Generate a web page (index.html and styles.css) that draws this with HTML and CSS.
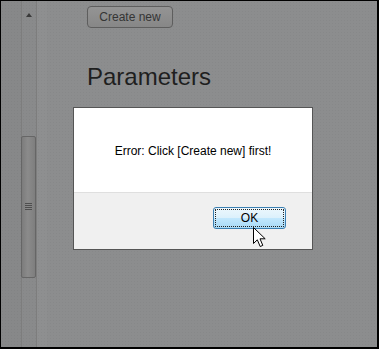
FILE: index.html
```html
<!DOCTYPE html>
<html>
<head>
<meta charset="utf-8">
<link rel="stylesheet" href="styles.css">
</head>
<body>
<div class="screen">
  <aside class="sidebar">
    <div class="side-a"></div>
    <div class="track">
      <div class="arrow-up"></div>
      <div class="thumb"><div class="grip"></div></div>
    </div>
    <div class="side-c"></div>
  </aside>
  <main class="main">
    <button class="btn-create">Create new</button>
    <h1 class="title">Parameters</h1>
  </main>

  <div class="dialog">
    <div class="dialog-body">Error: Click [Create new] first!</div>
    <div class="dialog-foot">
      <button class="btn-ok">OK</button>
    </div>
  </div>

  <svg class="cursor" width="14" height="21" viewBox="0 0 14 21">
    <path d="M0.5 0.5 L0.5 16.5 L4.3 12.8 L7.2 19.5 L9.8 18.4 L7 11.8 L12.2 11.8 Z" fill="#fff" stroke="#000" stroke-width="1" stroke-linejoin="miter"/>
  </svg>
</div>
</body>
</html>
```

FILE: styles.css
```css
* { box-sizing: border-box; }
html, body { margin: 0; padding: 0; background: #000; }
body { width: 379px; height: 349px; overflow: hidden; }

.screen {
  position: relative;
  width: 379px;
  height: 349px;
  border-style: solid;
  border-color: #000;
  border-width: 1px 2px 2px 1px;
  background-color: #8c8d8e;
  background-image: radial-gradient(rgba(0,0,0,0.035) 0.6px, transparent 0.8px);
  background-size: 3px 3px;
  display: flex;
  font-family: "Liberation Sans", Arial, sans-serif;
}

.sidebar { display: flex; height: 100%; }
.side-a { width: 20px; background: rgba(0,0,0,0.03); }
.track {
  width: 16px;
  border-left: 1px solid #7d7d7d;
  border-right: 1px solid #7d7d7d;
  background: rgba(0,0,0,0.02);
  display: flex;
  flex-direction: column;
  align-items: center;
  padding-top: 12px;
}
.arrow-up {
  width: 0; height: 0;
  border-left: 3px solid transparent;
  border-right: 3px solid transparent;
  border-bottom: 4px solid #3a3a3a;
}
.thumb {
  margin-top: 119px;
  margin-left: -1px;
  width: 15px;
  height: 142px;
  border: 1px solid #666;
  border-radius: 2px;
  background: linear-gradient(to right, #7c7c7c, #8b8b8b 45%, #7e7e7e);
  display: flex;
  align-items: center;
  justify-content: center;
}
.grip {
  width: 7px;
  height: 8px;
  background: repeating-linear-gradient(to bottom, #4e4e4e 0, #4e4e4e 1px, transparent 1px, transparent 2px);
}
.side-c { width: 10px; background: rgba(255,255,255,0.02); }

.main {
  flex: 1;
  padding: 5px 0 0 40px;
  display: flex;
  flex-direction: column;
  align-items: flex-start;
}
.btn-create {
  width: 86px;
  height: 22px;
  border: 1px solid #5e5e5e;
  border-radius: 4px;
  background: linear-gradient(#949494, #878787);
  color: #353535;
  font-family: "Liberation Sans", Arial, sans-serif;
  font-size: 12px;
  padding: 0;
  margin: 0;
}
.title {
  margin: 35px 0 0 0;
  font-size: 24px;
  line-height: 28px;
  font-weight: normal;
  color: #1f1f1f;
}

.dialog {
  position: absolute;
  left: 72px;
  top: 106px;
  width: 240px;
  height: 143px;
  border: 1px solid #555;
  display: flex;
  flex-direction: column;
  background: #f0f0f0;
}
.dialog-body {
  height: 85px;
  background: #fff;
  border-bottom: 1px solid #dfdfdf;
  display: flex;
  align-items: center;
  justify-content: center;
  font-size: 12px;
  color: #000;
  padding-top: 1px;
}
.dialog-foot {
  flex: 1;
  display: flex;
  justify-content: flex-end;
  align-items: flex-start;
  padding: 14px 26px 0 0;
}
.btn-ok {
  position: relative;
  width: 73px;
  height: 22px;
  margin: 0;
  padding: 0;
  border: 1px solid #3c7fb1;
  border-radius: 3px;
  background: linear-gradient(#ecf7fd 0%, #dcf1fc 48%, #c1e7fd 52%, #a9daf6 100%);
  font-family: "Liberation Sans", Arial, sans-serif;
  font-size: 12px;
  color: #000;
}
.btn-ok::after {
  content: "";
  position: absolute;
  inset: 1px;
  border: 1px dotted #222;
  border-radius: 1px;
}

.cursor {
  position: absolute;
  left: 252px;
  top: 226px;
}
```
